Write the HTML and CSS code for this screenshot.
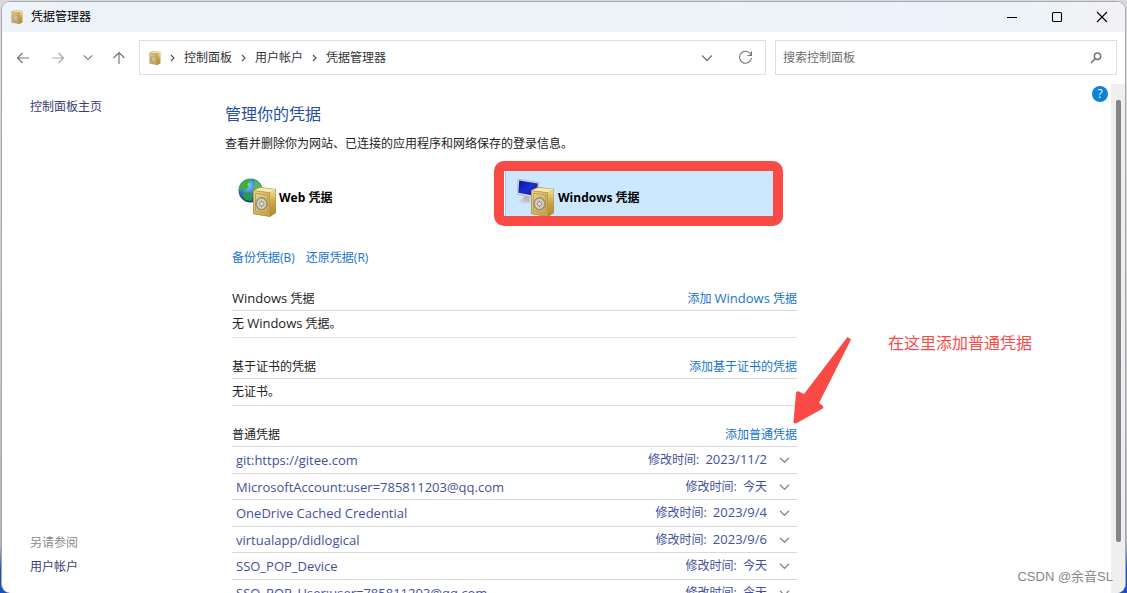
FILE: index.html
```html
<!DOCTYPE html>
<html lang="zh-CN">
<head>
<meta charset="utf-8">
<title>凭据管理器</title>
<link rel="stylesheet" href="styles.css">
</head>
<body>
<svg class="defs" aria-hidden="true">
  <defs>
    <linearGradient id="gold" x1="0" y1="0" x2="1" y2="1"><stop offset="0" stop-color="#ecd591"/><stop offset="1" stop-color="#c9a348"/></linearGradient>
    <linearGradient id="goldSide" x1="0" y1="0" x2="0" y2="1"><stop offset="0" stop-color="#f3e19a"/><stop offset=".5" stop-color="#c9a544"/><stop offset="1" stop-color="#a88a35"/></linearGradient>
    <radialGradient id="sea" cx=".4" cy=".3" r=".7"><stop offset="0" stop-color="#8fd0f4"/><stop offset=".5" stop-color="#2a7cc8"/><stop offset="1" stop-color="#123a8c"/></radialGradient>
    <linearGradient id="screen" x1="0" y1="0" x2="1" y2="1"><stop offset="0" stop-color="#0a12a0"/><stop offset=".5" stop-color="#1b2ed0"/><stop offset="1" stop-color="#0b1490"/></linearGradient>
    <symbol id="safe" viewBox="0 0 25 30">
      <path d="M1 3 L8 0 L24 2 L24 26 L18 30 L1 27Z" fill="#b3923f"/>
      <path d="M1.500 3.500 L8 .7 L23.500 2.200 L18 5.500Z" fill="#f6e8b4"/>
      <path d="M18 5.500 L23.500 2.500 V25.500 L18 29.200Z" fill="url(#goldSide)"/>
      <path d="M1.500 3.700 L17.500 5.700 V29 L1.500 26.500Z" fill="url(#gold)" stroke="#b9964a" stroke-width=".7"/>
      <path d="M3.500 6.300 L15.700 8 V26.500 L3.500 24.300Z" fill="none" stroke="#b59548" stroke-width=".8"/>
      <ellipse cx="9.500" cy="16.800" rx="5.600" ry="6.300" fill="#a9a18c" stroke="#8b846d" stroke-width=".8"/>
      <ellipse cx="9.500" cy="16.800" rx="3.900" ry="4.500" fill="#cfcbbb" stroke="#f3f0e4" stroke-width=".7"/>
      <path d="M9.500 12.500V21M5.700 16.800h7.600M7 14l5 5.600M12 14l-5 5.600" stroke="#958d76" stroke-width=".6"/>
      <circle cx="9.500" cy="16.800" r="1.800" fill="#efede5" stroke="#777" stroke-width=".6"/>
    </symbol>
    <symbol id="chevron" viewBox="0 0 12 8"><path d="M1 1.500 6 6.500 11 1.500" fill="none" stroke="currentColor" stroke-width="1.300"/></symbol>
    <symbol id="crumb" viewBox="0 0 5 8"><path d="M1 1 4 4 1 7" fill="none" stroke="currentColor" stroke-width="1.200"/></symbol>
  </defs>
</svg>

<div class="window">
  <header class="titlebar">
    <svg class="safe-small"><use href="#safe"/></svg>
    <h1 class="window-title">凭据管理器</h1>
    <div class="caption-buttons">
      <button class="caption-button" type="button" aria-label="最小化"><svg width="12" height="12" viewBox="0 0 12 12"><path d="M1 6.500H11" stroke="#000"/></svg></button>
      <button class="caption-button" type="button" aria-label="最大化"><svg width="12" height="12" viewBox="0 0 12 12"><rect x="1.500" y="1.500" width="9" height="9" rx="1" fill="none" stroke="#000" stroke-width="1.100"/></svg></button>
      <button class="caption-button" type="button" aria-label="关闭"><svg width="12" height="12" viewBox="0 0 12 12"><path d="M1 1 11 11M11 1 1 11" stroke="#000" stroke-width="1.100"/></svg></button>
    </div>
  </header>

  <nav class="toolbar">
    <div class="history">
      <button class="nav-button" type="button" aria-label="后退"><svg width="14" height="12" viewBox="0 0 14 12"><path d="M13 6H1.500M6.500 1 1.500 6 6.500 11" fill="none" stroke="#777" stroke-width="1.200"/></svg></button>
      <button class="nav-button" type="button" aria-label="前进"><svg width="14" height="12" viewBox="0 0 14 12"><path d="M1 6H12.500M7.500 1 12.500 6 7.500 11" fill="none" stroke="#a8a8a8" stroke-width="1.200"/></svg></button>
      <button class="nav-button narrow" type="button" aria-label="最近位置"><svg width="10" height="7"><use href="#chevron"/></svg></button>
      <button class="nav-button" type="button" aria-label="向上"><svg width="14" height="14" viewBox="0 0 14 14"><path d="M7 13V1.500M1.500 7 7 1.500 12.500 7" fill="none" stroke="#777" stroke-width="1.200"/></svg></button>
    </div>
    <div class="address">
      <svg class="safe-small"><use href="#safe"/></svg>
      <svg class="crumb"><use href="#crumb"/></svg><a href="#">控制面板</a>
      <svg class="crumb"><use href="#crumb"/></svg><a href="#">用户帐户</a>
      <svg class="crumb"><use href="#crumb"/></svg><a href="#">凭据管理器</a>
      <div class="address-actions">
        <button class="address-button" type="button" aria-label="以前的位置"><svg width="12" height="8"><use href="#chevron"/></svg></button>
        <button class="address-button" type="button" aria-label="刷新"><svg width="15" height="15" viewBox="0 0 15 15"><path d="M13.300 5.500A6 6 0 1 0 13.500 8M13.500 1.500V5.500H9.500" fill="none" stroke="#777" stroke-width="1.100"/></svg></button>
      </div>
    </div>
    <div class="search">
      <input class="search-input" type="search" placeholder="搜索控制面板" aria-label="搜索控制面板">
      <svg width="12" height="12" viewBox="0 0 12 12"><circle cx="7.500" cy="4.300" r="3.200" fill="none" stroke="#777" stroke-width="1.500"/><path d="M5.200 6.700 1 11" stroke="#777" stroke-width="1.700"/></svg>
    </div>
  </nav>

  <div class="content">
    <aside class="sidebar">
      <a href="#">控制面板主页</a>
      <div class="see-also">
        <span class="see-also-title">另请参阅</span>
        <a href="#">用户帐户</a>
      </div>
    </aside>

    <main class="main">
      <h2 class="heading">管理你的凭据</h2>
      <p class="intro">查看并删除你为网站、已连接的应用程序和网络保存的登录信息。</p>

      <div class="vaults">
        <button class="vault" type="button">
          <svg class="vault-icon" viewBox="0 0 40 40">
            <circle cx="12.500" cy="12.500" r="12" fill="url(#sea)"/>
            <path d="M3 5 8 1.500 13 1 12 4 9 6 11 9 7 12 4 11 2 14 1 10Z" fill="#3fae3a"/>
            <path d="M16 2 21 4.500 24 9 22 14 18 12 15 9 17 6Z" fill="#54b948"/>
            <path d="M5 15 11 14 15 18 13 23 8 22 5 19Z" fill="#2c9848"/>
            <use href="#safe" x="14" y="9" width="25" height="30"/>
          </svg>
          Web 凭据
        </button>
        <button class="vault selected" type="button">
          <svg class="vault-icon" viewBox="0 0 40 40">
            <ellipse cx="9" cy="23" rx="7" ry="2.500" fill="#d0d2d5"/>
            <path d="M7 16 13 17 12 24 6 23Z" fill="#b9bcc2"/>
            <path d="M1 1 22 4.500 21 20.500 0 16.500Z" fill="#d5d9e2" stroke="#a7abb8" stroke-width=".6"/>
            <path d="M2.200 2.500 20.700 5.600 19.900 18.300 1.400 14.800Z" fill="url(#screen)"/>
            <use href="#safe" x="13" y="9" width="25" height="30"/>
          </svg>
          Windows 凭据
        </button>
      </div>

      <div class="details">
        <div class="backup-links"><a href="#">备份凭据(B)</a><a href="#">还原凭据(R)</a></div>

        <section class="group">
          <div class="group-head"><h3><span class="latin">Windows</span> 凭据</h3><a href="#">添加 <span class="latin">Windows</span> 凭据</a></div>
          <p class="empty">无 <span class="latin">Windows</span> 凭据。</p>
        </section>
        <section class="group">
          <div class="group-head"><h3>基于证书的凭据</h3><a href="#">添加基于证书的凭据</a></div>
          <p class="empty">无证书。</p>
        </section>
        <section class="group">
          <div class="group-head"><h3>普通凭据</h3><a href="#">添加普通凭据</a></div>
          <button class="credential" type="button"><span class="latin">git:https://gitee.com</span><span class="modified">修改时间:&nbsp; <time class="latin">2023/11/2</time></span><svg class="expand"><use href="#chevron"/></svg></button>
          <button class="credential" type="button"><span class="latin">MicrosoftAccount:user=785811203@qq.com</span><span class="modified">修改时间:&nbsp; 今天</span><svg class="expand"><use href="#chevron"/></svg></button>
          <button class="credential" type="button"><span class="latin">OneDrive Cached Credential</span><span class="modified">修改时间:&nbsp; <time class="latin">2023/9/4</time></span><svg class="expand"><use href="#chevron"/></svg></button>
          <button class="credential" type="button"><span class="latin">virtualapp/didlogical</span><span class="modified">修改时间:&nbsp; <time class="latin">2023/9/6</time></span><svg class="expand"><use href="#chevron"/></svg></button>
          <button class="credential" type="button"><span class="latin">SSO_POP_Device</span><span class="modified">修改时间:&nbsp; 今天</span><svg class="expand"><use href="#chevron"/></svg></button>
          <button class="credential" type="button"><span class="latin">SSO_POP_User:user=785811203@qq.com</span><span class="modified">修改时间:&nbsp; 今天</span><svg class="expand"><use href="#chevron"/></svg></button>
        </section>
      </div>

      <svg class="arrow" viewBox="0 0 60 90"><path d="M55.500 1 59 3.500 27 67 30.500 69.500Q32.500 71.500 30 73L4 87.500Q1.500 88 1.500 85.500L4 57Q4.500 54.500 7 55.500L12 58Z" fill="#f94a46"/></svg>
      <p class="note">在这里添加普通凭据</p>
    </main>

    <button class="help" type="button" aria-label="帮助">?</button>
    <div class="scrollbar"><div class="thumb"></div></div>
  </div>
</div>
<p class="watermark">CSDN @余音SL</p>
</body>
</html>
```
FILE: styles.css
```css
* { box-sizing: border-box; }

body {
  margin: 0;
  height: 100vh;
  padding: 1px 1px 0;
  overflow: hidden;
  position: relative;
  background: linear-gradient(#d9dadb 0 16%, #c6c8ca 60%, #b4b6b9 92%, #1c50c0 96%);
  font: 12px/16px "Open Sans", "Noto Sans CJK SC", sans-serif;
  color: #222;
}

h1, h2, h3, p { margin: 0; font: inherit; }
a { text-decoration: none; color: #1a74cf; }
button { border: 0; padding: 0; background: none; font: inherit; color: inherit; text-align: left; }
svg { flex: none; display: block; }
.defs { position: absolute; width: 0; height: 0; }
.latin { font-size: 13px; line-height: 14px; }

.window {
  height: 100%;
  display: flex;
  flex-direction: column;
  border: 1px solid #a5a8ab;
  border-bottom: 0;
  border-radius: 9px;
  overflow: hidden;
  background: #fff;
}

.titlebar {
  flex: none;
  height: 30px;
  display: flex;
  align-items: center;
  gap: 8px;
  padding: 0 1px 0 9px;
  background: linear-gradient(90deg, #eef2f9, #edf2f8 55%, #edf3f6 65%, #edf2fb 80%, #edf3f6 93%, #f3f1f6);
}
.safe-small { width: 12px; height: 14px; }
.window-title { color: #000; }
.caption-buttons { display: flex; margin-left: auto; }
.caption-button { width: 45px; height: 30px; display: grid; place-items: center; }

.toolbar {
  flex: none;
  display: grid;
  grid-template-columns: 130px minmax(0, 636fr) minmax(0, 342fr);
  align-items: center;
  padding: 8px 8px 9px 7px;
}
.history { display: flex; justify-content: space-between; padding-right: 6px; }
.nav-button { width: 28px; height: 28px; display: grid; place-items: center; color: #777; }
.nav-button.narrow { width: 20px; }

.address, .search {
  height: 35px;
  display: flex;
  align-items: center;
  border: 1px solid #dedede;
}
.address { gap: 9px; margin-right: 9px; padding: 0 8px 0 9px; }
.address a { color: #333; }
.crumb { width: 5px; height: 8px; color: #555; }
.address-actions { display: flex; gap: 14px; margin-left: auto; }
.address-button { width: 24px; height: 24px; display: grid; place-items: center; color: #777; }
.search { padding: 0 14px 0 7px; }
.search-input { flex: 1; min-width: 0; border: 0; padding: 0; outline: 0; background: none; font: inherit; }
.search-input::placeholder { color: #6d6d6d; opacity: 1; }

.content {
  flex: 1;
  min-height: 0;
  display: flex;
  position: relative;
}
.sidebar {
  width: 223px;
  flex: none;
  display: flex;
  flex-direction: column;
  justify-content: space-between;
  padding: 15px 28px 18px;
}
.sidebar a { color: #3a3d70; }
.see-also { display: flex; flex-direction: column; gap: 8px; }
.see-also-title { color: #8a8a8a; }

.main { width: 572px; flex: none; position: relative; padding-top: 20px; }
.heading { font-size: 16px; line-height: 20px; color: #2450a8; }
.intro { margin-top: 12px; }

.vaults { display: grid; grid-template-columns: 1fr 1fr; column-gap: 2px; margin-top: 18px; padding-right: 14px; }
.vault {
  position: relative;
  height: 50px;
  display: flex;
  align-items: center;
  gap: 1px;
  padding: 6px 12px 0;
  border-left: 1px solid transparent;
  font-weight: 700;
  color: #000;
}
.vault.selected { padding-left: 11px; background: #cce8ff; border-color: #99d1ff; }
.vault.selected::after {
  content: "";
  position: absolute;
  inset: -9px 0 -6px -12px;
  border: 10px solid #f94a46;
  border-radius: 10px;
}
.vault-icon { width: 40px; height: 40px; }

.details { padding-left: 7px; }
.backup-links { display: flex; gap: 11px; margin: 30px 0 19px; }
.group { margin-bottom: 15px; }
.group-head {
  display: flex;
  justify-content: space-between;
  align-items: center;
  height: 26px;
  padding-top: 2px;
  border-bottom: 1px solid #d9d9d9;
}
.empty { height: 27px; padding-top: 5px; border-bottom: 1px solid #dedede; }
.credential {
  width: 100%;
  height: 26px;
  display: flex;
  align-items: center;
  padding: 0 7px 0 4px;
  border-bottom: 1px solid #d9d9d9;
  color: #3f519f;
}
.credential:nth-of-type(odd) { height: 27px; }
.modified { margin-left: auto; }
.expand { width: 11px; height: 8px; margin-left: 12px; color: #888; }

.arrow { position: absolute; left: 567px; top: 252px; width: 60px; height: 90px; }
.note {
  position: absolute;
  left: 663px;
  top: 246px;
  font-size: 16px;
  line-height: 24px;
  white-space: nowrap;
  font-family: "Noto Sans CJK SC", sans-serif;
  color: #f94a46;
}

.help {
  position: absolute;
  top: 2px;
  right: 17px;
  width: 16px;
  height: 16px;
  border-radius: 50%;
  background: #0c83d9;
  color: #fff;
  text-align: center;
}
.scrollbar {
  width: 14px;
  margin-left: auto;
  padding: 16px 4px 51px 5px;
  background: #efefef;
}
.thumb { height: 100%; border-radius: 2px; background: #858585; }

.watermark {
  position: absolute;
  right: 14px;
  bottom: 6px;
  font: 13px/20px "Liberation Sans", "Noto Sans CJK SC", sans-serif;
  color: #888;
}
```
